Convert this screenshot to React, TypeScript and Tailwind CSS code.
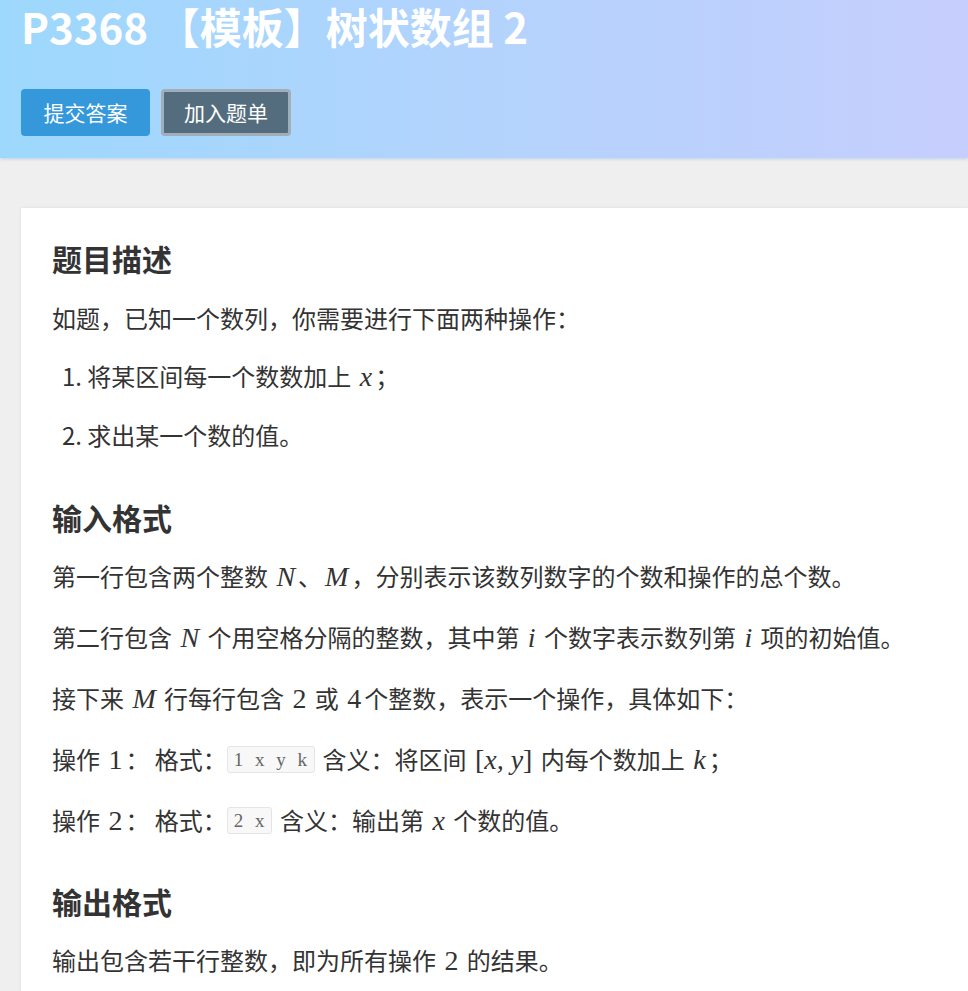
import React from "react";

const sans = "font-['Noto_Sans_CJK_SC','Noto_Sans',sans-serif]";

// KaTeX-like inline math: italic serif for variables, upright for digits
function M({ children, upright = false }: { children: React.ReactNode; upright?: boolean }) {
  return (
    <span
      className={`font-['Liberation_Serif',serif] text-[28px] leading-[36px] ${upright ? "" : "italic"} px-[3px]`}
    >
      {children}
    </span>
  );
}

function Code({ children }: { children: React.ReactNode }) {
  return (
    <code className="inline-block align-[3px] font-['Liberation_Serif',serif] text-[19px] leading-[25px] tracking-[3.5px] text-[#666] bg-[#f8f8f8] border border-[#e5e5e5] rounded-[3px] pl-[6px] pr-[3px] mr-[8px]">
      {children}
    </code>
  );
}

const h2 = "text-[30px] leading-[45px] font-bold text-[#333]";
const p = "text-[24px] leading-[36px] text-[#333] mb-[24px] whitespace-nowrap";

export default function App() {
  return (
    <div className={`min-h-screen w-full overflow-hidden bg-[#efefef] ${sans}`}>
      <header className="bg-gradient-to-r from-[#9dd8fd] to-[#c6cefd] px-[21px] pb-[22px] shadow-[0_1px_3px_rgba(150,190,230,0.6)]">
        <h1 className="text-[42px] leading-[52px] font-bold text-white whitespace-nowrap">
          P3368 【模板】树状数组 2
        </h1>
        <div className="mt-[37px] flex gap-[11px]">
          <button className="h-[47px] w-[129px] rounded-[4px] bg-[#3498db] text-white text-[21px]">
            提交答案
          </button>
          <button className="h-[47px] w-[130px] rounded-[4px] bg-[#546d7e] border-[3px] border-[#a1adb8] text-white text-[21px]">
            加入题单
          </button>
        </div>
      </header>

      <main className="mt-[50px] ml-[21px] bg-white shadow-[0_0_3px_rgba(0,0,0,0.08)] pl-[31px] pt-[28px] pb-[20px]">
        <h2 className={`${h2} mb-[19px]`}>题目描述</h2>
        <p className={`${p} !mb-[22px]`}>如题，已知一个数列，你需要进行下面两种操作：</p>
        <ol className="ml-[10px]">
          <li className={`${p} !mb-[22px]`}>
            1. 将某区间每一个数数加上 <M>x</M>；
          </li>
          <li className={`${p} !mb-[42px]`}>2. 求出某一个数的值。</li>
        </ol>

        <h2 className={`${h2} mb-[18px]`}>输入格式</h2>
        <p className={p}>
          第一行包含两个整数 <M>N</M>、<M>M</M>，分别表示该数列数字的个数和操作的总个数。
        </p>
        <p className={p}>
          第二行包含 <M>N</M> 个用空格分隔的整数，其中第 <M>i</M> 个数字表示数列第 <M>i</M> 项的初始值。
        </p>
        <p className={p}>
          接下来 <M>M</M> 行每行包含 <M upright>2</M> 或 <M upright>4</M>个整数，表示一个操作，具体如下：
        </p>
        <p className={p}>
          操作 <M upright>1</M>： 格式：<Code>1 x y k</Code>含义：将区间 <M><span className="not-italic">[</span>x, y<span className="not-italic">]</span></M> 内每个数加上 <M>k</M>；
        </p>
        <p className={`${p} !mb-[40px]`}>
          操作 <M upright>2</M>： 格式：<Code>2 x</Code>含义：输出第 <M>x</M> 个数的值。
        </p>

        <h2 className={`${h2} mb-[18px]`}>输出格式</h2>
        <p className={p}>
          输出包含若干行整数，即为所有操作 <M upright>2</M> 的结果。
        </p>
      </main>
    </div>
  );
}
